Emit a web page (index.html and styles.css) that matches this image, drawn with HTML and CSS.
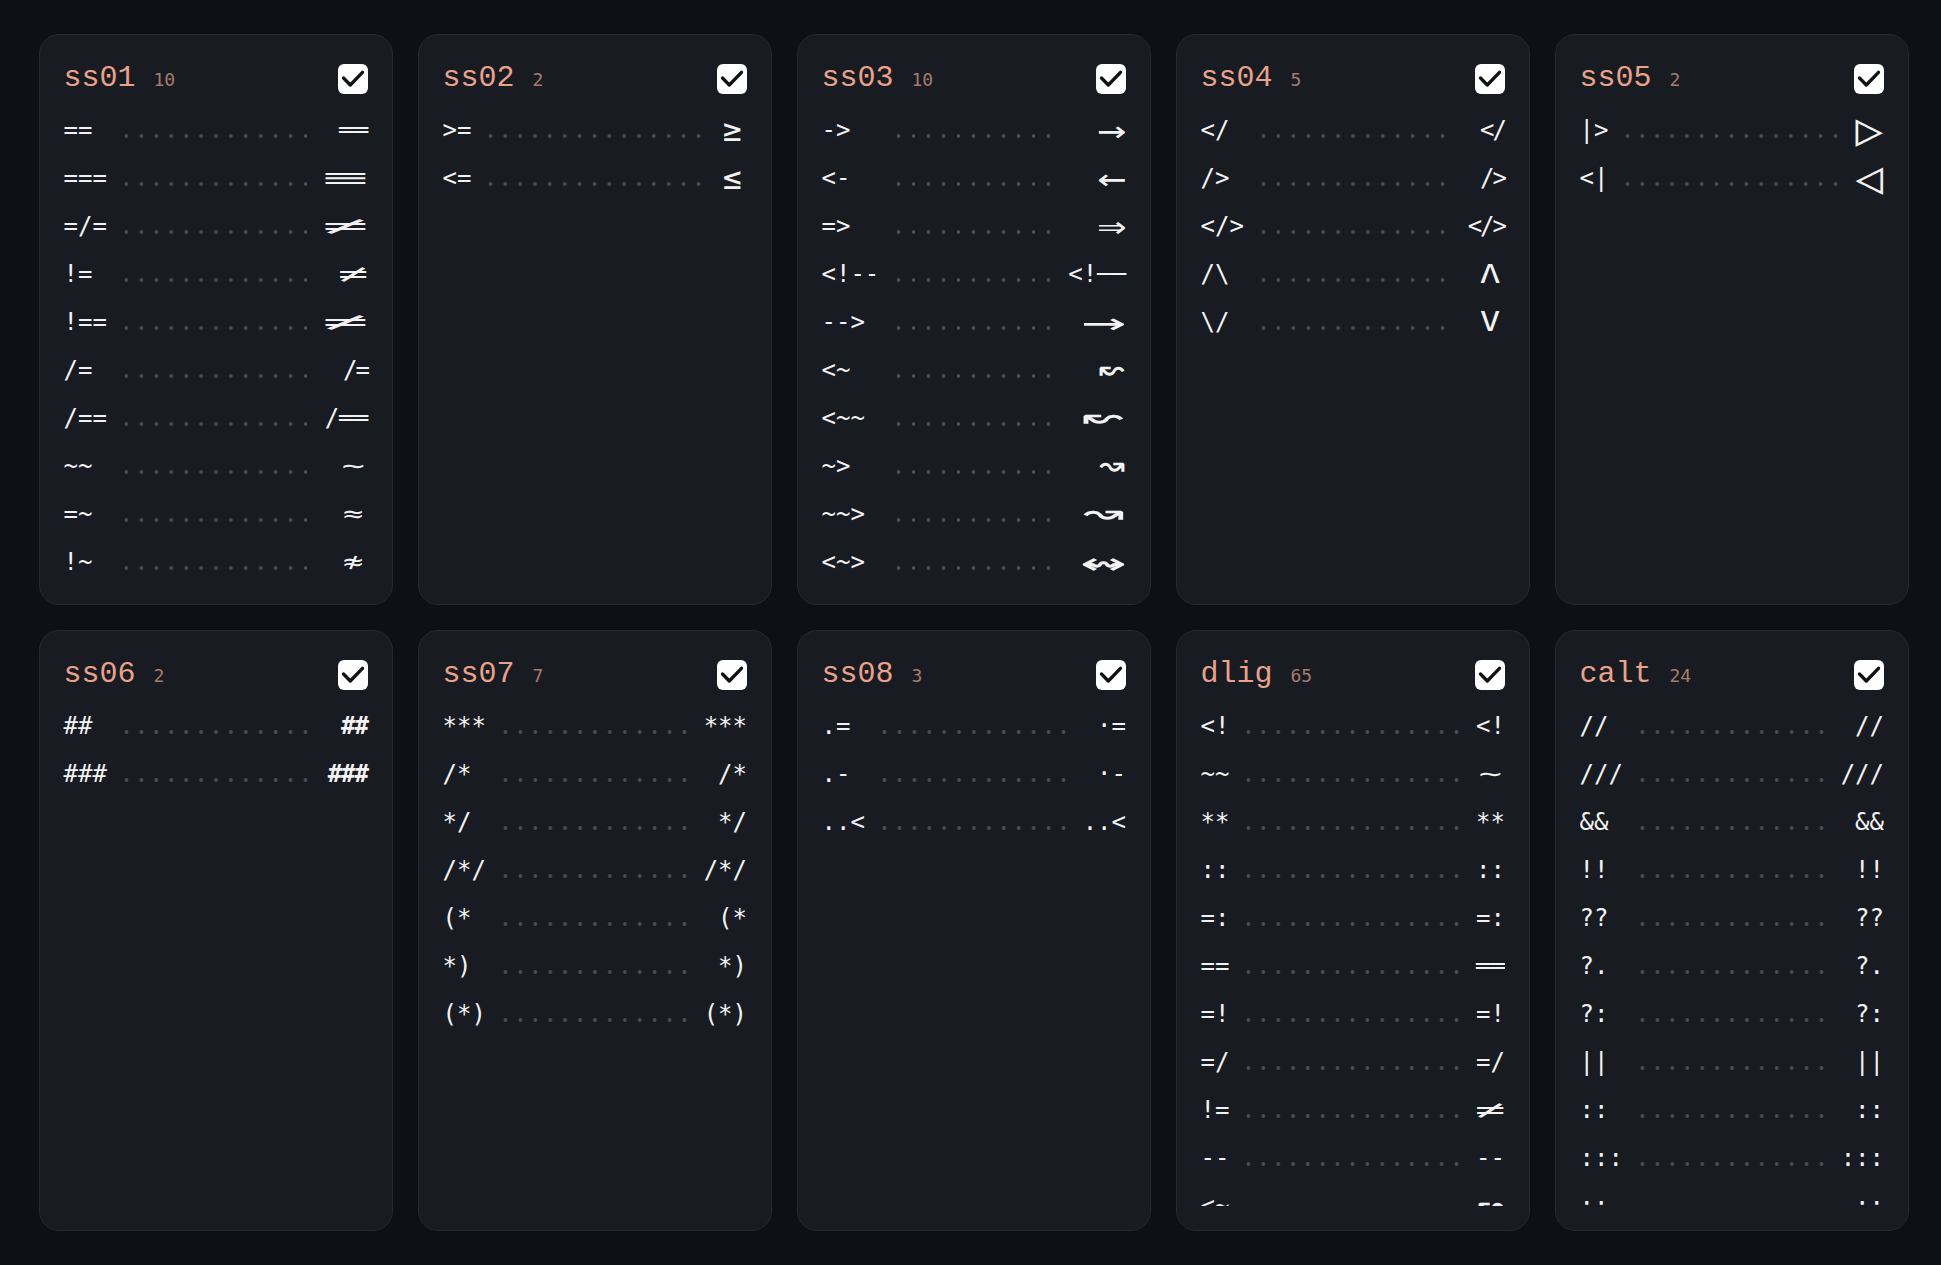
FILE: index.html
```html
<!DOCTYPE html>
<html lang="en">
<head>
<meta charset="utf-8">
<title>Font features</title>
<link rel="stylesheet" href="styles.css">
</head>
<body>
<main class="grid">

  <section class="card">
    <header class="head">
      <div class="title"><span class="name">ss01</span><span class="count">10</span></div>
      <span class="check"><svg viewBox="0 0 30 30" width="30" height="30"><path d="M5.5 14l6.8 7L24.5 8.3" fill="none" stroke="#111" stroke-width="3.3" stroke-linecap="round" stroke-linejoin="round"/></svg></span>
    </header>
    <div class="list">
      <span class="src">==</span><span class="lead"></span><span class="out w2">══</span>
      <span class="src">===</span><span class="lead"></span><span class="out w3"><span class="g x3">≡</span></span>
      <span class="src">=/=</span><span class="lead"></span><span class="out w3"><span class="g x3">≠</span></span>
      <span class="src">!=</span><span class="lead"></span><span class="out w2"><span class="g x2">≠</span></span>
      <span class="src">!==</span><span class="lead"></span><span class="out w3"><span class="g x3">≠</span></span>
      <span class="src">/=</span><span class="lead"></span><span class="out w2 tight">/=</span>
      <span class="src">/==</span><span class="lead"></span><span class="out w3">/══</span>
      <span class="src">~~</span><span class="lead"></span><span class="out w2 c"><span class="g x16">∼</span></span>
      <span class="src">=~</span><span class="lead"></span><span class="out w2 c"><span class="g x14">≈</span></span>
      <span class="src">!~</span><span class="lead"></span><span class="out w2 c"><span class="g x14">≉</span></span>
    </div>
  </section>

  <section class="card">
    <header class="head">
      <div class="title"><span class="name">ss02</span><span class="count">2</span></div>
      <span class="check"><svg viewBox="0 0 30 30" width="30" height="30"><path d="M5.5 14l6.8 7L24.5 8.3" fill="none" stroke="#111" stroke-width="3.3" stroke-linecap="round" stroke-linejoin="round"/></svg></span>
    </header>
    <div class="list">
      <span class="src">&gt;=</span><span class="lead"></span><span class="out w2 c"><span class="g xs">≥</span></span>
      <span class="src">&lt;=</span><span class="lead"></span><span class="out w2 c"><span class="g xs">≤</span></span>
    </div>
  </section>

  <section class="card">
    <header class="head">
      <div class="title"><span class="name">ss03</span><span class="count">10</span></div>
      <span class="check"><svg viewBox="0 0 30 30" width="30" height="30"><path d="M5.5 14l6.8 7L24.5 8.3" fill="none" stroke="#111" stroke-width="3.3" stroke-linecap="round" stroke-linejoin="round"/></svg></span>
    </header>
    <div class="list">
      <span class="src">-&gt;</span><span class="lead"></span><span class="out w2"><span class="g a2">→</span></span>
      <span class="src">&lt;-</span><span class="lead"></span><span class="out w2"><span class="g a2">←</span></span>
      <span class="src">=&gt;</span><span class="lead"></span><span class="out w2"><span class="g a2">⇒</span></span>
      <span class="src">&lt;!--</span><span class="lead"></span><span class="out w4">&lt;!──</span>
      <span class="src">--&gt;</span><span class="lead"></span><span class="out w3"><span class="g a3">→</span></span>
      <span class="src">&lt;~</span><span class="lead"></span><span class="out w2"><span class="g v2">↜</span></span>
      <span class="src">&lt;~~</span><span class="lead"></span><span class="out w3"><span class="g v3">↜</span></span>
      <span class="src">~&gt;</span><span class="lead"></span><span class="out w2"><span class="g v2">↝</span></span>
      <span class="src">~~&gt;</span><span class="lead"></span><span class="out w3"><span class="g v3">↝</span></span>
      <span class="src">&lt;~&gt;</span><span class="lead"></span><span class="out w3"><span class="g v3">↭</span></span>
    </div>
  </section>

  <section class="card">
    <header class="head">
      <div class="title"><span class="name">ss04</span><span class="count">5</span></div>
      <span class="check"><svg viewBox="0 0 30 30" width="30" height="30"><path d="M5.5 14l6.8 7L24.5 8.3" fill="none" stroke="#111" stroke-width="3.3" stroke-linecap="round" stroke-linejoin="round"/></svg></span>
    </header>
    <div class="list">
      <span class="src">&lt;/</span><span class="lead"></span><span class="out w2 tight">&lt;/</span>
      <span class="src">/&gt;</span><span class="lead"></span><span class="out w2 tight">/&gt;</span>
      <span class="src">&lt;/&gt;</span><span class="lead"></span><span class="out w3 tight">&lt;/&gt;</span>
      <span class="src">/\</span><span class="lead"></span><span class="out w2 c"><span class="g xl">Λ</span></span>
      <span class="src">\/</span><span class="lead"></span><span class="out w2 c"><span class="g xl">V</span></span>
    </div>
  </section>

  <section class="card">
    <header class="head">
      <div class="title"><span class="name">ss05</span><span class="count">2</span></div>
      <span class="check"><svg viewBox="0 0 30 30" width="30" height="30"><path d="M5.5 14l6.8 7L24.5 8.3" fill="none" stroke="#111" stroke-width="3.3" stroke-linecap="round" stroke-linejoin="round"/></svg></span>
    </header>
    <div class="list">
      <span class="src">|&gt;</span><span class="lead"></span><span class="out w2 c"><span class="g tri">▷</span></span>
      <span class="src">&lt;|</span><span class="lead"></span><span class="out w2 c"><span class="g tri">◁</span></span>
    </div>
  </section>

  <section class="card">
    <header class="head">
      <div class="title"><span class="name">ss06</span><span class="count">2</span></div>
      <span class="check"><svg viewBox="0 0 30 30" width="30" height="30"><path d="M5.5 14l6.8 7L24.5 8.3" fill="none" stroke="#111" stroke-width="3.3" stroke-linecap="round" stroke-linejoin="round"/></svg></span>
    </header>
    <div class="list">
      <span class="src">##</span><span class="lead"></span><span class="out w2 bold">##</span>
      <span class="src">###</span><span class="lead"></span><span class="out w3 bold">###</span>
    </div>
  </section>

  <section class="card">
    <header class="head">
      <div class="title"><span class="name">ss07</span><span class="count">7</span></div>
      <span class="check"><svg viewBox="0 0 30 30" width="30" height="30"><path d="M5.5 14l6.8 7L24.5 8.3" fill="none" stroke="#111" stroke-width="3.3" stroke-linecap="round" stroke-linejoin="round"/></svg></span>
    </header>
    <div class="list">
      <span class="src">***</span><span class="lead"></span><span class="out w3">***</span>
      <span class="src">/*</span><span class="lead"></span><span class="out w2">/*</span>
      <span class="src">*/</span><span class="lead"></span><span class="out w2">*/</span>
      <span class="src">/*/</span><span class="lead"></span><span class="out w3">/*/</span>
      <span class="src">(*</span><span class="lead"></span><span class="out w2">(*</span>
      <span class="src">*)</span><span class="lead"></span><span class="out w2">*)</span>
      <span class="src">(*)</span><span class="lead"></span><span class="out w3">(*)</span>
    </div>
  </section>

  <section class="card">
    <header class="head">
      <div class="title"><span class="name">ss08</span><span class="count">3</span></div>
      <span class="check"><svg viewBox="0 0 30 30" width="30" height="30"><path d="M5.5 14l6.8 7L24.5 8.3" fill="none" stroke="#111" stroke-width="3.3" stroke-linecap="round" stroke-linejoin="round"/></svg></span>
    </header>
    <div class="list">
      <span class="src">.=</span><span class="lead"></span><span class="out w2">·=</span>
      <span class="src">.-</span><span class="lead"></span><span class="out w2">·-</span>
      <span class="src">..&lt;</span><span class="lead"></span><span class="out w3">..&lt;</span>
    </div>
  </section>

  <section class="card">
    <header class="head">
      <div class="title"><span class="name">dlig</span><span class="count">65</span></div>
      <span class="check"><svg viewBox="0 0 30 30" width="30" height="30"><path d="M5.5 14l6.8 7L24.5 8.3" fill="none" stroke="#111" stroke-width="3.3" stroke-linecap="round" stroke-linejoin="round"/></svg></span>
    </header>
    <div class="list scroll">
      <span class="src">&lt;!</span><span class="lead"></span><span class="out w2">&lt;!</span>
      <span class="src">~~</span><span class="lead"></span><span class="out w2 c"><span class="g x16">∼</span></span>
      <span class="src">**</span><span class="lead"></span><span class="out w2">**</span>
      <span class="src">::</span><span class="lead"></span><span class="out w2">::</span>
      <span class="src">=:</span><span class="lead"></span><span class="out w2">=:</span>
      <span class="src">==</span><span class="lead"></span><span class="out w2">══</span>
      <span class="src">=!</span><span class="lead"></span><span class="out w2">=!</span>
      <span class="src">=/</span><span class="lead"></span><span class="out w2">=/</span>
      <span class="src">!=</span><span class="lead"></span><span class="out w2"><span class="g x2">≠</span></span>
      <span class="src">--</span><span class="lead"></span><span class="out w2">--</span>
      <span class="src">&lt;~</span><span class="lead"></span><span class="out w2"><span class="g v2">↜</span></span>
      <span class="src">~&gt;</span><span class="lead"></span><span class="out w2"><span class="g v2">↝</span></span>
    </div>
  </section>

  <section class="card">
    <header class="head">
      <div class="title"><span class="name">calt</span><span class="count">24</span></div>
      <span class="check"><svg viewBox="0 0 30 30" width="30" height="30"><path d="M5.5 14l6.8 7L24.5 8.3" fill="none" stroke="#111" stroke-width="3.3" stroke-linecap="round" stroke-linejoin="round"/></svg></span>
    </header>
    <div class="list scroll">
      <span class="src">//</span><span class="lead"></span><span class="out w2">//</span>
      <span class="src">///</span><span class="lead"></span><span class="out w3">///</span>
      <span class="src">&amp;&amp;</span><span class="lead"></span><span class="out w2">&amp;&amp;</span>
      <span class="src">!!</span><span class="lead"></span><span class="out w2">!!</span>
      <span class="src">??</span><span class="lead"></span><span class="out w2">??</span>
      <span class="src">?.</span><span class="lead"></span><span class="out w2">?.</span>
      <span class="src">?:</span><span class="lead"></span><span class="out w2">?:</span>
      <span class="src">||</span><span class="lead"></span><span class="out w2">||</span>
      <span class="src">::</span><span class="lead"></span><span class="out w2">::</span>
      <span class="src">:::</span><span class="lead"></span><span class="out w3">:::</span>
      <span class="src">::</span><span class="lead"></span><span class="out w2">::</span>
      <span class="src">...</span><span class="lead"></span><span class="out w3">...</span>
    </div>
  </section>

</main>
</body>
</html>
```

FILE: styles.css
```css
html, body {
  margin: 0;
  background: #0d1017;
}

body {
  font-family: "DejaVu Sans Mono", "Liberation Mono", monospace;
  color: #f2f2f2;
}

.grid {
  display: grid;
  grid-template-columns: repeat(5, 1fr);
  gap: 25px 24.5px;
  padding: 34px 32px 34px 38.5px;
}

.card {
  background: #181b21;
  border: 1px solid #252930;
  border-radius: 20px;
  padding: 29px 24px 24px;
  display: flex;
  flex-direction: column;
  min-width: 0;
}

.head {
  display: flex;
  align-items: center;
  justify-content: space-between;
  height: 30px;
}

.title {
  display: flex;
  align-items: baseline;
  gap: 18px;
  line-height: 30px;
}

.name {
  font-family: "Liberation Mono", "DejaVu Sans Mono", monospace;
  font-size: 30px;
  color: #e9a28b;
}

.count {
  font-size: 18px;
  color: #a67c6c;
}

.check {
  width: 30px;
  height: 30px;
  background: #ffffff;
  border-radius: 6px;
  display: flex;
}

.list {
  margin-top: 18px;
  display: grid;
  grid-template-columns: auto 1fr auto;
  column-gap: 12px;
  row-gap: 12px;
  align-content: start;
  font-size: 24px;
  line-height: 36px;
}

.list.scroll {
  max-height: 498px;
  overflow: hidden;
}

.src, .out {
  white-space: pre;
}

.out {
  text-align: right;
  justify-self: end;
}

.out.c {
  text-align: center;
}

.w2 { width: 2ch; }
.w3 { width: 3ch; }
.w4 { width: 4ch; }

.tight {
  letter-spacing: -2px;
}

.bold {
  font-weight: bold;
  letter-spacing: -1px;
}

.lead {
  background-image: radial-gradient(circle, #484c53 1.6px, transparent 2.2px);
  background-size: 14.87px 6px;
  background-repeat: round no-repeat;
  background-position: 0 21.3px;
}

.g {
  display: inline-block;
  line-height: 1;
  transform-origin: 100% 50%;
}

.c .g {
  transform-origin: 50% 50%;
}

.x2 { transform: scaleX(2.1); }
.x3 { transform: scaleX(3.2); }
.x16 { transform: scaleX(1.6); }
.x14 { transform: scaleX(1.4); }
.xs { transform: scale(1.3, 1.4); }
.xl { transform: scale(1.4, 1.12); }
.a2 { transform: scale(2, 1.5); }
.a3 { transform: scale(3.1, 1.5); }
.v2 { transform: scale(2, 1.6); }
.v3 { transform: scale(3.2, 1.6); }
.tri { transform: scale(1.9); }
```
